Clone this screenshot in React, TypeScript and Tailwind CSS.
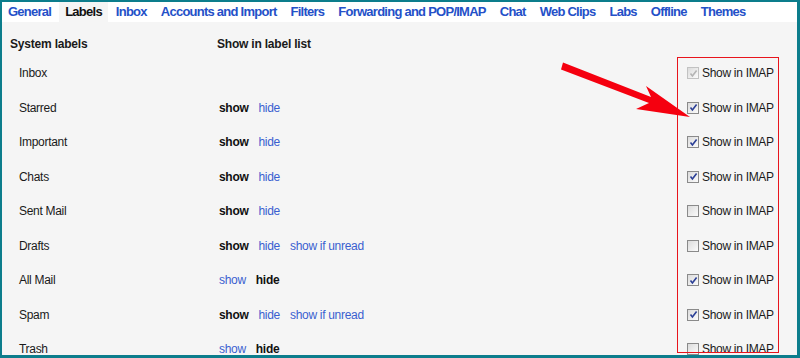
import React from "react";

type Mode = "none" | "show" | "hide";

interface LabelRow {
  name: string;
  mode: Mode;
  unread?: boolean;
  imap: "disabled" | "on" | "off";
}

const tabs = [
  "General",
  "Labels",
  "Inbox",
  "Accounts and Import",
  "Filters",
  "Forwarding and POP/IMAP",
  "Chat",
  "Web Clips",
  "Labs",
  "Offline",
  "Themes",
];

const rows: LabelRow[] = [
  { name: "Inbox", mode: "none", imap: "disabled" },
  { name: "Starred", mode: "show", imap: "on" },
  { name: "Important", mode: "show", imap: "on" },
  { name: "Chats", mode: "show", imap: "on" },
  { name: "Sent Mail", mode: "show", imap: "off" },
  { name: "Drafts", mode: "show", unread: true, imap: "off" },
  { name: "All Mail", mode: "hide", imap: "on" },
  { name: "Spam", mode: "show", unread: true, imap: "on" },
  { name: "Trash", mode: "hide", imap: "off" },
];

function Checkbox({ state }: { state: LabelRow["imap"] }) {
  const disabled = state === "disabled";
  return (
    <span
      className={`flex h-[12px] w-[12px] items-center justify-center border bg-gradient-to-br from-[#dcdcdc] to-[#fbfbfb] ${
        disabled ? "border-[#c2c2c2]" : "border-[#8a8a8a]"
      }`}
    >
      {state !== "off" && (
        <svg width="9" height="9" viewBox="0 0 9 9">
          <path
            d="M1.5 4.6 L3.4 7 L7.6 1.4"
            fill="none"
            stroke={disabled ? "#b4b4b4" : "#2b3f96"}
            strokeWidth="1.6"
          />
        </svg>
      )}
    </span>
  );
}

function Visibility({ row }: { row: LabelRow }) {
  if (row.mode === "none") return null;
  return (
    <div className="flex items-center gap-[10px]">
      {row.mode === "show" ? (
        <span className="font-bold text-[#111]">show</span>
      ) : (
        <span className="text-[#3a5fd0]">show</span>
      )}
      {row.mode === "hide" ? (
        <span className="font-bold text-[#111]">hide</span>
      ) : (
        <span className="text-[#3a5fd0]">hide</span>
      )}
      {row.unread && <span className="text-[#3a5fd0]">show if unread</span>}
    </div>
  );
}

export default function App() {
  return (
    <div
      className="relative h-[358px] w-[800px] overflow-hidden border-t-2 border-r-[3px] border-b-[3px] border-l-2 border-[#0c7d8c] bg-[#f5f5f5]"
      style={{ fontFamily: '"Liberation Sans", Arial, sans-serif' }}
    >
      {/* tab bar */}
      <div className="flex h-[20px] gap-[2px] bg-white">
        {tabs.map((t) => (
          <div
            key={t}
            className={`flex items-center px-[6px] text-[13px] font-bold tracking-[-0.75px] ${
              t === "Labels" ? "bg-[#f5f5f5] text-[#111]" : "text-[#2450c8]"
            }`}
          >
            {t}
          </div>
        ))}
      </div>

      <div className="pt-[10px] text-[12px] tracking-[-0.3px] text-[#1a1a1a]">
        <div className="flex h-[24px] items-center font-bold tracking-[-0.2px]">
          <div className="w-[215px] pl-[8px]">System labels</div>
          <div>Show in label list</div>
        </div>
        {rows.map((r) => (
          <div key={r.name} className="flex h-[34.5px] items-center">
            <div className="w-[217px] pl-[17px]">{r.name}</div>
            <div className="w-[468px]">
              <Visibility row={r} />
            </div>
            <div className="flex items-center gap-[3px]">
              <Checkbox state={r.imap} />
              <span>Show in IMAP</span>
            </div>
          </div>
        ))}
      </div>

      {/* annotation overlay */}
      <div className="pointer-events-none absolute left-[675px] top-[55px] h-[296px] w-[102px] border border-[#e8141c]" />
      <svg
        className="pointer-events-none absolute left-[-2px] top-[-2px]"
        width="800"
        height="358"
        viewBox="0 0 800 358"
      >
        <polygon
          points="563,62.5 651,97 646,86 690,117 636,109 649,103 561,69.5"
          fill="#f5000f"
        />
      </svg>
    </div>
  );
}
